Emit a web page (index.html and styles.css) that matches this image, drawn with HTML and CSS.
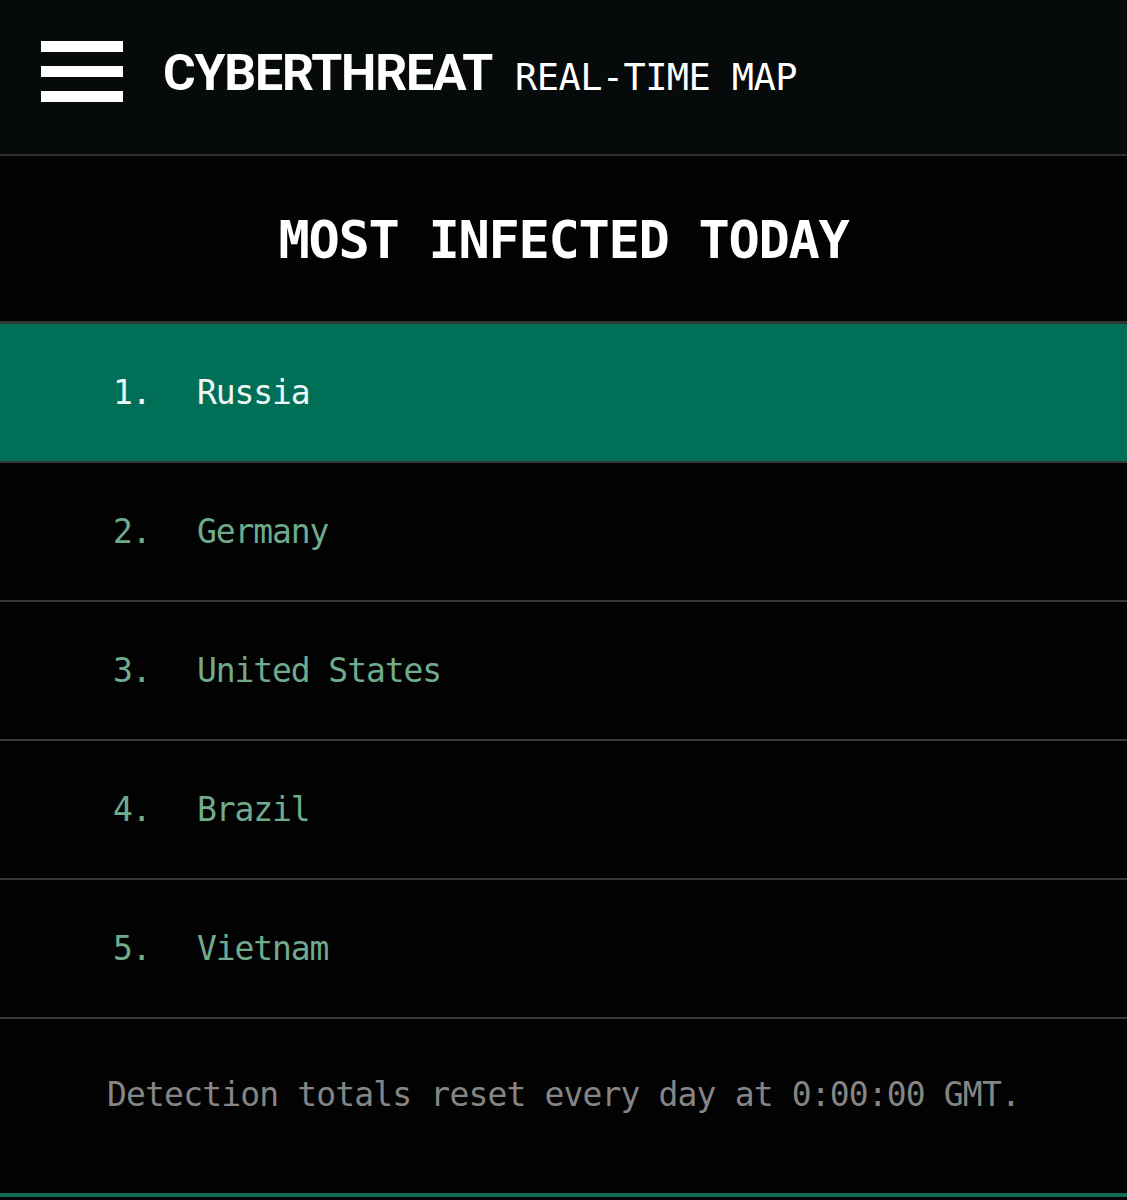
FILE: index.html
```html
<!DOCTYPE html>
<html lang="en">
<head>
<meta charset="utf-8">
<title>Cyberthreat Real-Time Map</title>
<link rel="stylesheet" href="styles.css">
</head>
<body>
<header class="topbar">
  <svg class="burger" width="82" height="62" viewBox="0 0 82 62" aria-hidden="true">
    <rect x="0" y="0" width="82" height="11" fill="#ffffff"/>
    <rect x="0" y="25" width="82" height="11" fill="#ffffff"/>
    <rect x="0" y="50" width="82" height="11" fill="#ffffff"/>
  </svg>
  <div class="brand">
    <span class="brand-main">CYBERTHREAT</span>
    <span class="brand-sub">REAL-TIME MAP</span>
  </div>
</header>
<main class="panel">
  <h1 class="panel-title">MOST INFECTED TODAY</h1>
  <ol class="ranking">
    <li class="rank-row active"><span class="rank-num">1.</span><span class="rank-name">Russia</span></li>
    <li class="rank-row"><span class="rank-num">2.</span><span class="rank-name">Germany</span></li>
    <li class="rank-row"><span class="rank-num">3.</span><span class="rank-name">United States</span></li>
    <li class="rank-row"><span class="rank-num">4.</span><span class="rank-name">Brazil</span></li>
    <li class="rank-row"><span class="rank-num">5.</span><span class="rank-name">Vietnam</span></li>
  </ol>
  <p class="note">Detection totals reset every day at 0:00:00 GMT.</p>
</main>
</body>
</html>
```

FILE: styles.css
```css
html, body {
  margin: 0;
  padding: 0;
  background: #020202;
}
body {
  width: 1127px;
  height: 1200px;
  overflow: hidden;
  font-family: "DejaVu Sans Mono", "Liberation Mono", monospace;
}
.topbar {
  height: 154px;
  background: #070a0a;
  border-bottom: 2px solid #2b2f2f;
  display: flex;
  align-items: center;
  padding-left: 41px;
  box-sizing: content-box;
}
.burger {
  display: block;
  flex: none;
  margin-top: -10px;
}
.brand {
  margin-left: 40px;
  display: flex;
  align-items: baseline;
  color: #ffffff;
  margin-top: -8px;
}
.brand-main {
  font-family: Roboto, "Open Sans", sans-serif;
  font-weight: 700;
  font-size: 50px;
  letter-spacing: -1.2px;
}
.brand-sub {
  font-family: "DejaVu Sans Mono", monospace;
  font-size: 37px;
  letter-spacing: -0.6px;
  margin-left: 23px;
}
.panel {
  background: #020202;
}
.panel-title {
  margin: 0;
  height: 167px;
  display: flex;
  align-items: center;
  justify-content: center;
  color: #ffffff;
  font-size: 52px;
  font-weight: 700;
  letter-spacing: -1.3px;
  border-bottom: 2px solid #333535;
  padding-top: 2px;
  box-sizing: border-box;
}
.ranking {
  list-style: none;
  margin: 0;
  padding: 0;
}
.rank-row {
  height: 139px;
  box-sizing: border-box;
  border-bottom: 2px solid #363838;
  display: flex;
  align-items: center;
  padding-left: 113px;
  font-size: 33px;
  letter-spacing: -1.1px;
  color: #6fab8c;
}
.rank-row.active {
  background: #006f57;
  color: #eef8f4;
  border-top: 1px solid #2c3a36;
  height: 140px;
}
.rank-num {
  width: 84px;
  flex: none;
}
.note {
  margin: 0;
  height: 178px;
  display: flex;
  align-items: center;
  justify-content: center;
  color: #858585;
  font-size: 33px;
  letter-spacing: -0.85px;
  padding-bottom: 24px;
  border-bottom: 4px solid #0f6b56;
  box-sizing: border-box;
}
```
